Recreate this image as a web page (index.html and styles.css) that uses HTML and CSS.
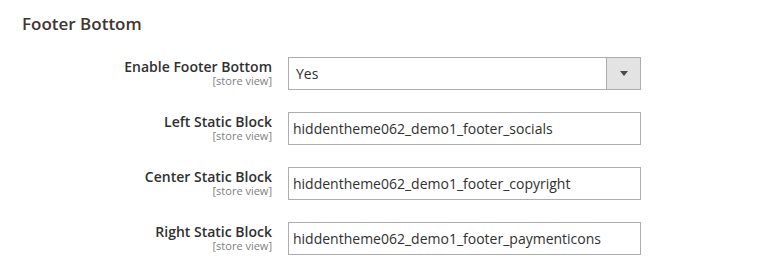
FILE: index.html
```html
<!DOCTYPE html>
<html>
<head>
<meta charset="utf-8">
<link rel="stylesheet" href="styles.css">
</head>
<body>
<section class="section">
  <h2 class="title">Footer Bottom</h2>
  <div class="rows">
    <div class="row">
      <div class="label"><span class="name">Enable Footer Bottom</span><span class="scope">[store view]</span></div>
      <div class="select"><span class="value">Yes</span><span class="btn"><span class="arrow"></span></span></div>
    </div>
    <div class="row">
      <div class="label"><span class="name">Left Static Block</span><span class="scope">[store view]</span></div>
      <div class="input">hiddentheme062_demo1_footer_socials</div>
    </div>
    <div class="row">
      <div class="label"><span class="name">Center Static Block</span><span class="scope">[store view]</span></div>
      <div class="input">hiddentheme062_demo1_footer_copyright</div>
    </div>
    <div class="row">
      <div class="label"><span class="name">Right Static Block</span><span class="scope">[store view]</span></div>
      <div class="input">hiddentheme062_demo1_footer_paymenticons</div>
    </div>
  </div>
</section>
</body>
</html>
```
FILE: styles.css
```css
html, body {
  margin: 0;
  padding: 0;
  background: #ffffff;
}
body {
  font-family: "Open Sans", "DejaVu Sans", sans-serif;
  color: #303030;
}
.section {
  padding: 12px 0 0 22px;
}
.title {
  margin: 0;
  font-size: 17px;
  font-weight: 600;
  line-height: 23px;
  color: #41362f;
}
.rows {
  display: flex;
  flex-direction: column;
  gap: 22px;
  margin-top: 22px;
}
.row {
  display: flex;
  align-items: flex-start;
}
.label {
  width: 250px;
  display: flex;
  flex-direction: column;
  align-items: flex-end;
  padding-top: 2px;
}
.name {
  font-size: 14px;
  font-weight: 600;
  line-height: 16px;
  color: #303030;
}
.scope {
  font-size: 11px;
  line-height: 12px;
  color: #808080;
}
.select, .input {
  margin-left: 16px;
  width: 351px;
  height: 31px;
  border: 1px solid #adadad;
  box-sizing: content-box;
  font-size: 14px;
  line-height: 31px;
  color: #303030;
  display: flex;
  align-items: center;
}
.select .value {
  flex: 1;
  padding-left: 7px;
}
.select .btn {
  width: 33px;
  height: 31px;
  background: #e3e3e3;
  border-left: 1px solid #adadad;
  display: flex;
  align-items: center;
  justify-content: center;
}
.arrow {
  width: 0;
  height: 0;
  border-left: 4px solid transparent;
  border-right: 4px solid transparent;
  border-top: 5px solid #514943;
}
.input {
  padding-left: 4px;
  width: 347px;
}
```
